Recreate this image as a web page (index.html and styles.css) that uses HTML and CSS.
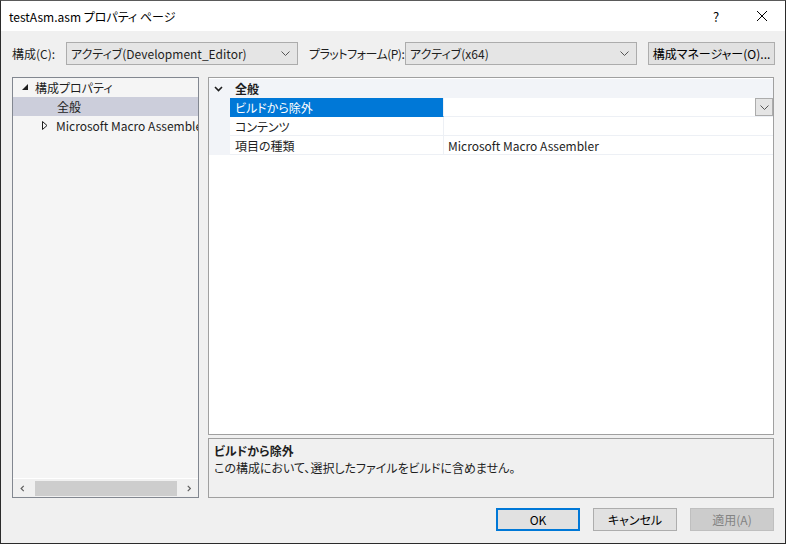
FILE: index.html
```html
<!DOCTYPE html>
<html lang="ja">

<head>
    <meta charset="UTF-8">
    <title>testAsm.asm プロパティ ページ</title>
    <link rel="stylesheet" href="styles.css">
</head>

<body>
    <div class="window">
        <div class="titlebar">
            <div class="title">testAsm.asm プロパティ ページ</div>
            <div class="title-btn help">?</div>
            <div class="title-btn close">
                <svg width="12" height="12" viewBox="0 0 12 12"><path d="M1 1 L11 11 M11 1 L1 11" stroke="#000" stroke-width="1" fill="none"/></svg>
            </div>
        </div>

        <div class="content">
            <div class="toolbar">
                <span class="label config-label">構成(C):</span>
                <div class="combo combo-config">
                    <span>アクティブ(Development_Editor)</span>
                    <svg class="combo-arrow" width="9" height="5" viewBox="0 0 9 5"><path d="M0.5 0.5 L4.5 4.5 L8.5 0.5" stroke="#555" fill="none"/></svg>
                </div>
                <span class="label platform-label">プラットフォーム(P):</span>
                <div class="combo combo-platform">
                    <span>アクティブ(x64)</span>
                    <svg class="combo-arrow" width="9" height="5" viewBox="0 0 9 5"><path d="M0.5 0.5 L4.5 4.5 L8.5 0.5" stroke="#555" fill="none"/></svg>
                </div>
                <div class="button manager-btn">構成マネージャー(O)...</div>
            </div>

            <div class="main">
                <div class="tree-pane">
                    <div class="tree">
                        <div class="tree-item">
                            <svg class="expander" width="7" height="7" viewBox="0 0 7 7"><path d="M6 0 L6 6 L0 6 Z" fill="#1e1e1e"/></svg>
                            <span>構成プロパティ</span>
                        </div>
                        <div class="tree-item selected level-2">
                            <span>全般</span>
                        </div>
                        <div class="tree-item level-1">
                            <svg class="expander" width="6" height="9" viewBox="0 0 6 9"><path d="M0.5 0.5 L5 4.5 L0.5 8.5 Z" fill="none" stroke="#1e1e1e"/></svg>
                            <span>Microsoft Macro Assembler</span>
                        </div>
                    </div>
                    <div class="hscroll">
                        <svg class="scroll-arrow" width="6" height="9" viewBox="0 0 6 9"><path d="M5 1 L1.5 4.5 L5 8" stroke="#606060" stroke-width="1.6" fill="none"/></svg>
                        <div class="scroll-track"><div class="scroll-thumb"></div></div>
                        <svg class="scroll-arrow" width="6" height="9" viewBox="0 0 6 9"><path d="M1 1 L4.5 4.5 L1 8" stroke="#606060" stroke-width="1.6" fill="none"/></svg>
                    </div>
                </div>

                <div class="right-col">
                    <div class="grid">
                        <div class="category">
                            <div class="gutter">
                                <svg width="9" height="6" viewBox="0 0 9 6"><path d="M1 1 L4.5 4.5 L8 1" stroke="#1e1e1e" stroke-width="1.6" fill="none"/></svg>
                            </div>
                            <div class="category-name">全般</div>
                        </div>
                        <div class="prop-row">
                            <div class="gutter"></div>
                            <div class="prop-name active">ビルドから除外</div>
                            <div class="prop-value">
                                <div class="value-drop">
                                    <svg width="9" height="5" viewBox="0 0 9 5"><path d="M0.5 0.5 L4.5 4.5 L8.5 0.5" stroke="#555" fill="none"/></svg>
                                </div>
                            </div>
                        </div>
                        <div class="prop-row">
                            <div class="gutter"></div>
                            <div class="prop-name">コンテンツ</div>
                            <div class="prop-value"></div>
                        </div>
                        <div class="prop-row">
                            <div class="gutter"></div>
                            <div class="prop-name">項目の種類</div>
                            <div class="prop-value">Microsoft Macro Assembler</div>
                        </div>
                    </div>
                    <div class="description">
                        <div class="desc-title">ビルドから除外</div>
                        <div class="desc-text">この構成において、選択したファイルをビルドに含めません。</div>
                    </div>
                </div>
            </div>

            <div class="footer">
                <div class="button ok-btn">OK</div>
                <div class="button">キャンセル</div>
                <div class="button disabled">適用(A)</div>
            </div>
        </div>
    </div>
</body>

</html>
```

FILE: styles.css
```css
* {
    box-sizing: border-box;
}

body {
    margin: 0;
    font-family: "Noto Sans CJK JP", "Noto Sans", sans-serif;
    font-size: 12px;
    font-feature-settings: "palt";
    color: #1e1e1e;
}

.window {
    width: 786px;
    height: 544px;
    border: 1px solid #2b2b2b;
    border-top-color: #5a5a5a;
    display: flex;
    flex-direction: column;
    background: #f0f0f0;
}

.titlebar {
    height: 30px;
    background: #fff;
    display: flex;
    align-items: center;
    padding-left: 8px;
}

.title {
    flex: 1;
    font-size: 12px;
    color: #000;
}

.title-btn {
    width: 46px;
    height: 30px;
    display: flex;
    align-items: center;
    justify-content: center;
    font-size: 13px;
    color: #000;
}

.content {
    flex: 1;
    display: flex;
    flex-direction: column;
    padding: 11px 11px 0 11px;
}

/* top row */
.toolbar {
    display: flex;
    align-items: center;
    height: 23px;
}

.label {
    white-space: nowrap;
}

.config-label {
    width: 54px;
    flex: none;
}

.platform-label {
    margin-left: 11px;
    width: 96px;
    flex: none;
    letter-spacing: -0.5px;
}

.combo {
    height: 23px;
    flex: none;
    border: 1px solid #acacac;
    background: #e5e5e5;
    display: flex;
    align-items: center;
    padding: 0 7px 0 4px;
}

.combo span {
    flex: 1;
    white-space: nowrap;
}

.combo-config {
    width: 232px;
}

.combo-platform {
    width: 232px;
}

.button {
    height: 23px;
    border: 1px solid #adadad;
    background: #e1e1e1;
    display: flex;
    align-items: center;
    justify-content: center;
    white-space: nowrap;
    color: #000;
}

.manager-btn {
    width: 127px;
    margin-left: 11px;
    flex: none;
}

/* main area */
.main {
    display: flex;
    margin-top: 12px;
    height: 421px;
}

.tree-pane {
    width: 187px;
    flex: none;
    border: 1px solid #828790;
    background: #f5f5f5;
    display: flex;
    flex-direction: column;
}

.tree {
    flex: 1;
    overflow: hidden;
}

.tree-item {
    height: 19px;
    display: flex;
    align-items: center;
    padding-left: 9px;
    white-space: nowrap;
    overflow: hidden;
}

.tree-item .expander {
    flex: none;
    margin-right: 6px;
}

.tree-item.level-1 {
    padding-left: 29px;
}

.tree-item.level-1 .expander {
    margin-right: 8px;
}

.tree-item.level-2 {
    padding-left: 44px;
}

.tree-item.selected {
    background: #cccedb;
}

.hscroll {
    height: 19px;
    border-top: 1px solid #fff;
    background: #f0f0f0;
    display: flex;
    align-items: center;
    padding: 0 7px;
}

.scroll-track {
    flex: 1;
    padding: 0 10px;
}

.scroll-thumb {
    width: 142px;
    height: 15px;
    background: #cdcdcd;
}

.right-col {
    margin-left: 9px;
    width: 566px;
    display: flex;
    flex-direction: column;
}

.grid {
    height: 359px;
    border: 1px solid #a0a0a0;
    background: #fff;
    padding-top: 1px;
}

.category {
    height: 19px;
    display: flex;
    background: #f2f4f8;
}

.gutter {
    width: 21px;
    flex: none;
    background: #f2f4f8;
    display: flex;
    align-items: center;
    justify-content: center;
    padding-right: 3px;
}

.category-name {
    font-weight: bold;
    display: flex;
    align-items: center;
    padding-left: 5px;
}

.prop-row {
    height: 19px;
    display: flex;
}

.prop-name {
    width: 214px;
    padding-left: 5px;
    display: flex;
    align-items: center;
    border-bottom: 1px solid #edf0f5;
    border-right: 1px solid #edf0f5;
}

.prop-name.active {
    background: #0078d7;
    color: #fff;
    border-bottom-color: #0078d7;
}

.prop-value {
    flex: 1;
    display: flex;
    align-items: center;
    padding-left: 4px;
    border-bottom: 1px solid #edf0f5;
}

.value-drop {
    margin-left: auto;
    width: 18px;
    height: 18px;
    border: 1px solid #acacac;
    background: #e5e5e5;
    display: flex;
    align-items: center;
    justify-content: center;
}

.description {
    margin-top: 3px;
    height: 60px;
    border: 1px solid #a0a0a0;
    padding: 3px 5px;
}

.desc-title {
    font-weight: bold;
    line-height: 17px;
}

.desc-text {
    line-height: 17px;
}

/* bottom buttons */
.footer {
    display: flex;
    justify-content: flex-end;
    gap: 13px;
    margin-top: 10px;
}

.footer .button {
    width: 84px;
}

.ok-btn {
    border: 2px solid #0078d7;
}

.button.disabled {
    background: #cccccc;
    border-color: #bfbfbf;
    color: #838383;
}
```
